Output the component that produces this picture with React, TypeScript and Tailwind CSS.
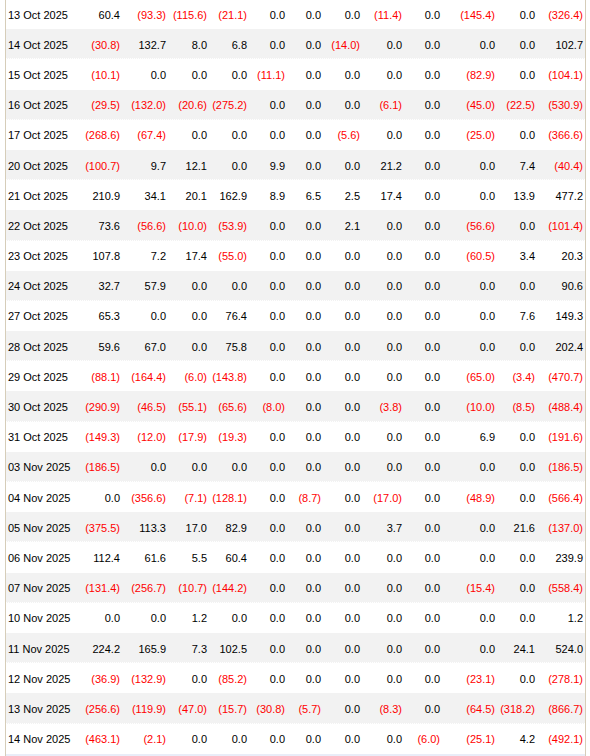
import React from "react";

const rows: [string, string[]][] = [
  ["13 Oct 2025", ["60.4", "(93.3)", "(115.6)", "(21.1)", "0.0", "0.0", "0.0", "(11.4)", "0.0", "(145.4)", "0.0", "(326.4)"]],
  ["14 Oct 2025", ["(30.8)", "132.7", "8.0", "6.8", "0.0", "0.0", "(14.0)", "0.0", "0.0", "0.0", "0.0", "102.7"]],
  ["15 Oct 2025", ["(10.1)", "0.0", "0.0", "0.0", "(11.1)", "0.0", "0.0", "0.0", "0.0", "(82.9)", "0.0", "(104.1)"]],
  ["16 Oct 2025", ["(29.5)", "(132.0)", "(20.6)", "(275.2)", "0.0", "0.0", "0.0", "(6.1)", "0.0", "(45.0)", "(22.5)", "(530.9)"]],
  ["17 Oct 2025", ["(268.6)", "(67.4)", "0.0", "0.0", "0.0", "0.0", "(5.6)", "0.0", "0.0", "(25.0)", "0.0", "(366.6)"]],
  ["20 Oct 2025", ["(100.7)", "9.7", "12.1", "0.0", "9.9", "0.0", "0.0", "21.2", "0.0", "0.0", "7.4", "(40.4)"]],
  ["21 Oct 2025", ["210.9", "34.1", "20.1", "162.9", "8.9", "6.5", "2.5", "17.4", "0.0", "0.0", "13.9", "477.2"]],
  ["22 Oct 2025", ["73.6", "(56.6)", "(10.0)", "(53.9)", "0.0", "0.0", "2.1", "0.0", "0.0", "(56.6)", "0.0", "(101.4)"]],
  ["23 Oct 2025", ["107.8", "7.2", "17.4", "(55.0)", "0.0", "0.0", "0.0", "0.0", "0.0", "(60.5)", "3.4", "20.3"]],
  ["24 Oct 2025", ["32.7", "57.9", "0.0", "0.0", "0.0", "0.0", "0.0", "0.0", "0.0", "0.0", "0.0", "90.6"]],
  ["27 Oct 2025", ["65.3", "0.0", "0.0", "76.4", "0.0", "0.0", "0.0", "0.0", "0.0", "0.0", "7.6", "149.3"]],
  ["28 Oct 2025", ["59.6", "67.0", "0.0", "75.8", "0.0", "0.0", "0.0", "0.0", "0.0", "0.0", "0.0", "202.4"]],
  ["29 Oct 2025", ["(88.1)", "(164.4)", "(6.0)", "(143.8)", "0.0", "0.0", "0.0", "0.0", "0.0", "(65.0)", "(3.4)", "(470.7)"]],
  ["30 Oct 2025", ["(290.9)", "(46.5)", "(55.1)", "(65.6)", "(8.0)", "0.0", "0.0", "(3.8)", "0.0", "(10.0)", "(8.5)", "(488.4)"]],
  ["31 Oct 2025", ["(149.3)", "(12.0)", "(17.9)", "(19.3)", "0.0", "0.0", "0.0", "0.0", "0.0", "6.9", "0.0", "(191.6)"]],
  ["03 Nov 2025", ["(186.5)", "0.0", "0.0", "0.0", "0.0", "0.0", "0.0", "0.0", "0.0", "0.0", "0.0", "(186.5)"]],
  ["04 Nov 2025", ["0.0", "(356.6)", "(7.1)", "(128.1)", "0.0", "(8.7)", "0.0", "(17.0)", "0.0", "(48.9)", "0.0", "(566.4)"]],
  ["05 Nov 2025", ["(375.5)", "113.3", "17.0", "82.9", "0.0", "0.0", "0.0", "3.7", "0.0", "0.0", "21.6", "(137.0)"]],
  ["06 Nov 2025", ["112.4", "61.6", "5.5", "60.4", "0.0", "0.0", "0.0", "0.0", "0.0", "0.0", "0.0", "239.9"]],
  ["07 Nov 2025", ["(131.4)", "(256.7)", "(10.7)", "(144.2)", "0.0", "0.0", "0.0", "0.0", "0.0", "(15.4)", "0.0", "(558.4)"]],
  ["10 Nov 2025", ["0.0", "0.0", "1.2", "0.0", "0.0", "0.0", "0.0", "0.0", "0.0", "0.0", "0.0", "1.2"]],
  ["11 Nov 2025", ["224.2", "165.9", "7.3", "102.5", "0.0", "0.0", "0.0", "0.0", "0.0", "0.0", "24.1", "524.0"]],
  ["12 Nov 2025", ["(36.9)", "(132.9)", "0.0", "(85.2)", "0.0", "0.0", "0.0", "0.0", "0.0", "(23.1)", "0.0", "(278.1)"]],
  ["13 Nov 2025", ["(256.6)", "(119.9)", "(47.0)", "(15.7)", "(30.8)", "(5.7)", "0.0", "(8.3)", "0.0", "(64.5)", "(318.2)", "(866.7)"]],
  ["14 Nov 2025", ["(463.1)", "(2.1)", "0.0", "0.0", "0.0", "0.0", "0.0", "0.0", "(6.0)", "(25.1)", "4.2", "(492.1)"]],
];

export default function App() {
  return (
    <div
      className="bg-white w-[590px] h-[756px] overflow-hidden text-[11px] leading-none"
      style={{ fontFamily: '"Liberation Sans", Arial, sans-serif' }}
    >
      <div className="-mt-px ml-[5px] w-[581px] border-l border-r border-[#d6cdb9]">
        {rows.map(([date, vals], i) => (
          <div
            key={date}
            className={`grid grid-cols-[70px_46px_46px_41px_40px_38px_36px_39px_42px_38px_55px_40px_48px] h-[30.2px] items-center border-b border-dotted border-white ${
              i % 2 === 1 ? "bg-[#f2f2f2]" : "bg-white"
            }`}
          >
            <div className="pl-[2px] pt-[3px] text-black whitespace-nowrap">{date}</div>
            {vals.map((v, j) => (
              <div
                key={j}
                className={`pr-[2px] pt-[3px] text-right whitespace-nowrap ${
                  v.startsWith("(") ? "text-[#ff0000]" : "text-black"
                }`}
              >
                {v}
              </div>
            ))}
          </div>
        ))}
        <div className="h-[4px] bg-[#e9edf8]" />
      </div>
    </div>
  );
}
